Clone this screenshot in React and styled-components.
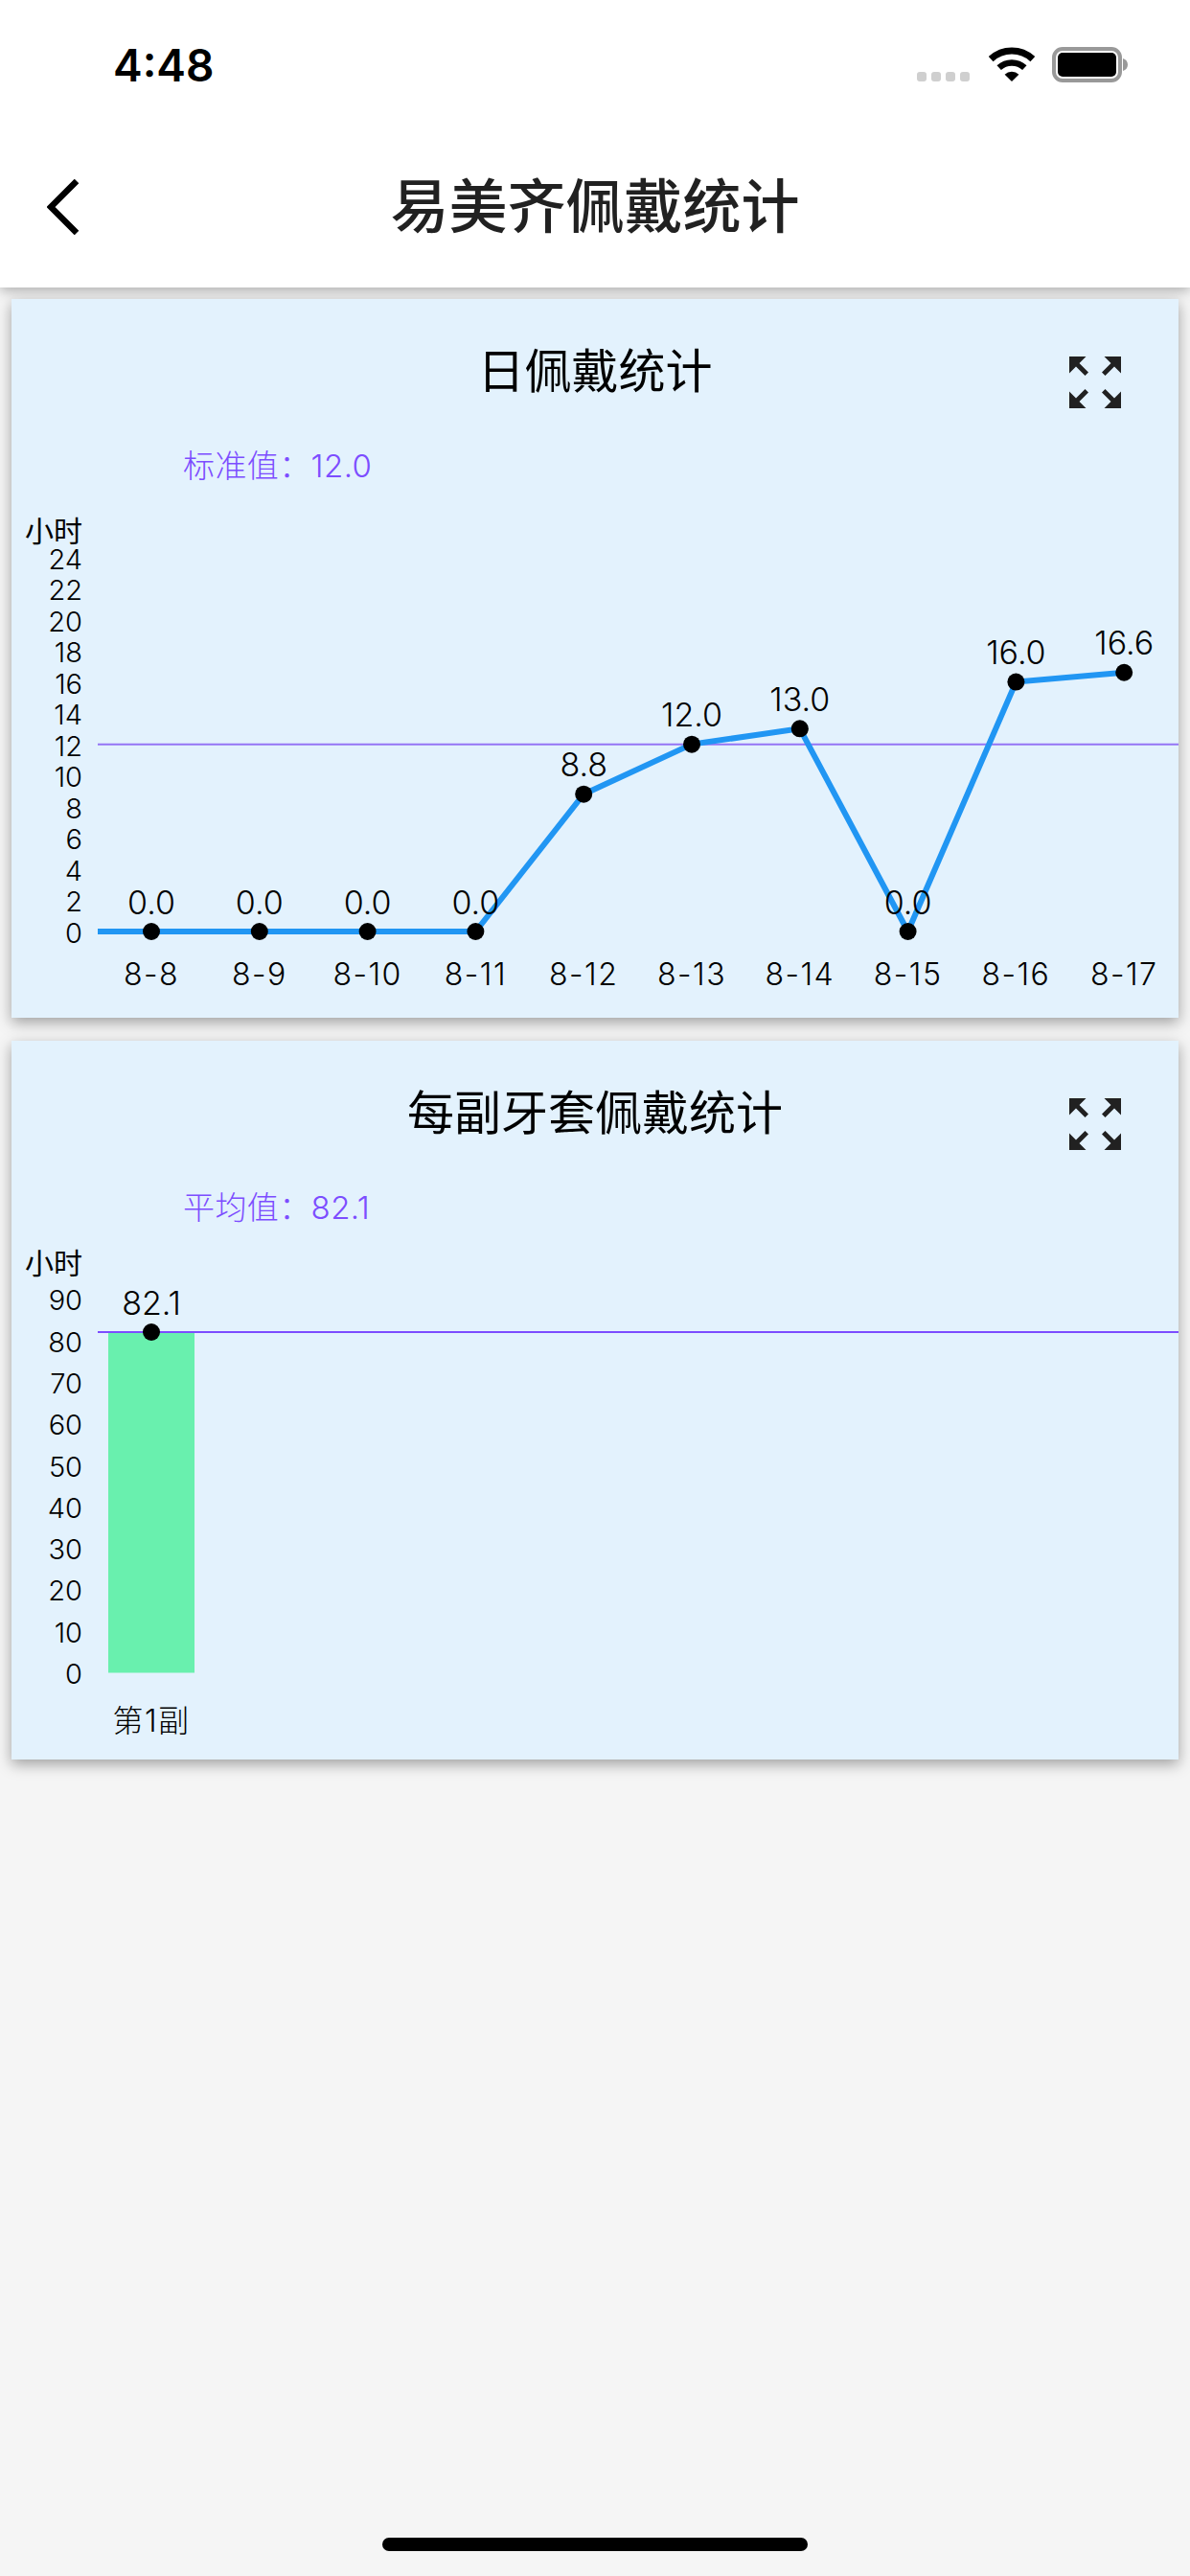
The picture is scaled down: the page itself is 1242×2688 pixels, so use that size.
import React from "react";
import styled, { createGlobalStyle } from "styled-components";

const GlobalStyle = createGlobalStyle`
  * { box-sizing: border-box; }
  html, body { margin: 0; padding: 0; background: #f5f5f5; }
  body { font-family: Inter, "Noto Sans CJK SC", sans-serif; }
`;

const Screen = styled.div`
  width: 1242px;
  height: 2688px;
  display: flex;
  flex-direction: column;
  background: #f5f5f5;
  overflow: hidden;
`;

const Header = styled.header`
  height: 300px;
  flex: none;
  background: #fff;
  box-shadow: 0 3px 12px rgba(0, 0, 0, 0.3);
`;

const StatusBar = styled.div`
  height: 132px;
  display: flex;
  justify-content: space-between;
  padding: 0 65px 0 118px;
`;

const Time = styled.div`
  margin-top: 42px;
  font-size: 46px;
  line-height: 52px;
  font-weight: 600;
  color: #000;
`;

const StatusIcons = styled.div`
  display: flex;
  align-items: flex-end;
  height: 37px;
  margin-top: 49px;
`;

const SignalDots = styled.div`
  display: flex;
  gap: 5px;
  margin: 0 20px 1px 0;
`;

const SignalDot = styled.span`
  width: 10px;
  height: 10px;
  border-radius: 3px;
  background: #cfcfcf;
`;

const WifiIcon = styled.svg`
  margin-right: 18px;
`;

const NavBar = styled.nav`
  height: 168px;
  display: grid;
  grid-template-columns: 1fr auto 1fr;
  align-items: center;
`;

const BackIcon = styled.svg`
  margin-left: 49px;
`;

const NavTitle = styled.h1`
  margin: 0;
  font-size: 61px;
  font-weight: 500;
  color: #212121;
  line-height: 80px;
`;

const Main = styled.main`
  flex: 1;
  display: flex;
  flex-direction: column;
  gap: 24px;
  padding: 12px;
`;

const Card = styled.section`
  height: 750px;
  background: #e3f2fd;
  box-shadow: 0 5px 14px rgba(0, 0, 0, 0.35);
`;

const CardHeader = styled.div`
  height: 144px;
  display: grid;
  grid-template-columns: 1fr auto 1fr;
  align-items: start;
`;

const CardTitle = styled.h2`
  grid-column: 2;
  margin: 46px 0 0;
  font-size: 49px;
  line-height: 60px;
  font-weight: 400;
  color: #000;
`;

const ExpandIcon = styled.svg`
  grid-column: 3;
  justify-self: end;
  margin: 60px 60px 0 0;
`;

const LimitLabel = styled.div`
  height: 60px;
  padding-left: 179px;
  font-size: 33px;
  font-weight: 300;
  line-height: 60px;
  letter-spacing: 0.4px;
  color: #7c4dff;
`;

const ChartSvg = styled.svg`
  display: block;
`;

const Tick = styled.text`
  font-size: 29px;
  font-weight: 300;
  fill: #000;
  text-anchor: end;
`;

const UnitLabel = styled.text`
  font-size: 30px;
  fill: #000;
  text-anchor: end;
`;

const ValueLabel = styled.text`
  font-size: 34px;
  font-weight: 300;
  fill: #000;
  text-anchor: middle;
`;

const CategoryLabel = styled.text`
  font-size: 32px;
  font-weight: 300;
  letter-spacing: 1.5px;
  fill: #000;
  text-anchor: middle;
`;

const HomeIndicator = styled.div`
  flex: none;
  width: 444px;
  height: 14px;
  margin: 0 auto 26px;
  border-radius: 7px;
  background: #000;
`;

const days = [
  ["8-8", 0], ["8-9", 0], ["8-10", 0], ["8-11", 0], ["8-12", 8.8],
  ["8-13", 12], ["8-14", 13], ["8-15", 0], ["8-16", 16], ["8-17", 16.6],
];

function Expand() {
  const arrow = "M0 0H17.5L10.5 7L20 16.5L16.5 20L7 10.5L0 17.5Z";
  return (
    <ExpandIcon width="54" height="54" viewBox="0 0 54 54" fill="#212121">
      <path d={arrow} />
      <path d={arrow} transform="rotate(90 27 27)" />
      <path d={arrow} transform="rotate(180 27 27)" />
      <path d={arrow} transform="rotate(270 27 27)" />
    </ExpandIcon>
  );
}

function DailyChart() {
  const y0 = 456;
  const unit = 16.28;
  const px = (i) => 146 + i * 112.8;
  const py = (v) => y0 - v * unit;
  const ticks = [];
  for (let v = 0; v <= 24; v += 2) ticks.push(v);
  const line = days.map(([, v], i) => `${px(i)},${py(v)}`).join(" ");

  return (
    <ChartSvg width="1218" height="546" viewBox="0 0 1218 546">
      <UnitLabel x="74" y="49">小时</UnitLabel>
      {ticks.map((v) => (
        <Tick key={v} x="74" y={y0 + 11.5 - v * 16.25}>{v}</Tick>
      ))}
      <line x1="90" x2="1218" y1={py(12)} y2={py(12)} stroke="#9575f5" strokeWidth="2" />
      <polyline points={`90,${y0} ${line}`} fill="none" stroke="#2196f3" strokeWidth="6" />
      {days.map(([, v], i) => (
        <circle key={i} cx={px(i)} cy={py(v)} r="9" fill="#000" />
      ))}
      {days.map(([, v], i) => (
        <ValueLabel key={i} x={px(i)} y={py(v) - 18.5}>{v.toFixed(1)}</ValueLabel>
      ))}
      {days.map(([d], i) => (
        <CategoryLabel key={d} x={px(i)} y="512">{d}</CategoryLabel>
      ))}
    </ChartSvg>
  );
}

function BraceChart() {
  const y0 = 455.5;
  const unit = 4.33;
  const ticks = [0, 10, 20, 30, 40, 50, 60, 70, 80, 90];
  const top = y0 - 82.1 * unit;

  return (
    <ChartSvg width="1218" height="546" viewBox="0 0 1218 546">
      <UnitLabel x="74" y="39">小时</UnitLabel>
      {ticks.map((v) => (
        <Tick key={v} x="74" y={y0 + 11.5 - v * unit}>{v}</Tick>
      ))}
      <rect x="101" y={top} width="90" height={82.1 * unit} fill="#69f0ae" />
      <line x1="90" x2="1218" y1={top} y2={top} stroke="#7c4dff" strokeWidth="2" />
      <circle cx="146" cy={top} r="9" fill="#000" />
      <ValueLabel x="146" y="82">82.1</ValueLabel>
      <CategoryLabel x="146" y="517">第1副</CategoryLabel>
    </ChartSvg>
  );
}

export default function App() {
  return (
    <Screen>
      <GlobalStyle />
      <Header>
        <StatusBar>
          <Time>4:48</Time>
          <StatusIcons>
            <SignalDots>
              <SignalDot />
              <SignalDot />
              <SignalDot />
              <SignalDot />
            </SignalDots>
            <WifiIcon width="48" height="37" viewBox="0 0 48 37">
              <path d="M2.2 12.6A32 32 0 0 1 45.8 12.6" fill="none" stroke="#000" strokeWidth="7" />
              <path d="M10.7 21.7A19.5 19.5 0 0 1 37.3 21.7" fill="none" stroke="#000" strokeWidth="6.5" />
              <path d="M24 36L16.6 28.7A10.5 10.5 0 0 1 31.4 28.7Z" fill="#000" />
            </WifiIcon>
            <svg width="79" height="37" viewBox="0 0 79 37">
              <rect x="2" y="2" width="69" height="33" rx="9" fill="#fff" stroke="#999" strokeWidth="4" />
              <rect x="6" y="6" width="61" height="25" rx="5" fill="#000" />
              <path d="M74 12C77 13 79 15 79 18.5C79 22 77 24 74 25Z" fill="#999" />
            </svg>
          </StatusIcons>
        </StatusBar>
        <NavBar>
          <BackIcon width="34" height="58" viewBox="0 0 34 58">
            <path d="M31 2L4 29L31 56" fill="none" stroke="#000" strokeWidth="6.5" />
          </BackIcon>
          <NavTitle>易美齐佩戴统计</NavTitle>
        </NavBar>
      </Header>
      <Main>
        <Card>
          <CardHeader>
            <CardTitle>日佩戴统计</CardTitle>
            <Expand />
          </CardHeader>
          <LimitLabel>标准值：12.0</LimitLabel>
          <DailyChart />
        </Card>
        <Card>
          <CardHeader>
            <CardTitle>每副牙套佩戴统计</CardTitle>
            <Expand />
          </CardHeader>
          <LimitLabel>平均值：82.1</LimitLabel>
          <BraceChart />
        </Card>
      </Main>
      <HomeIndicator />
    </Screen>
  );
}
